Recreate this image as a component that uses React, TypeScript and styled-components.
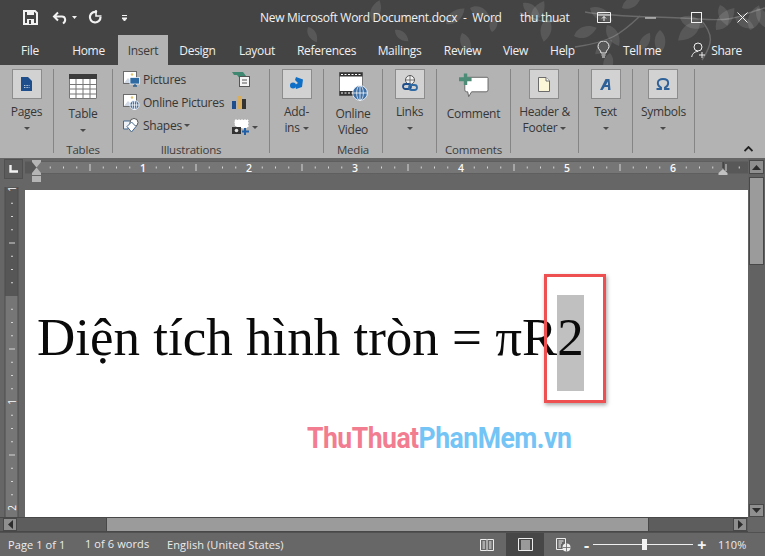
import React from 'react';
import styled, { createGlobalStyle } from 'styled-components';

const GlobalStyle = createGlobalStyle`
  html, body {
    margin: 0;
    padding: 0;
    background: #444;
  }
  * {
    box-sizing: border-box;
  }
`;

const Window = styled.div`
  width: 765px;
  height: 556px;
  display: flex;
  flex-direction: column;
  overflow: hidden;
  position: relative;
  background: #444;
  font-family: 'Open Sans', 'Noto Sans', sans-serif;
  font-size: 12px;
`;

const LeafLayer = styled.svg`
  position: absolute;
  left: 0;
  top: 0;
  pointer-events: none;
`;

const TitleBar = styled.div`
  height: 35px;
  display: flex;
  align-items: center;
  position: relative;
  color: #f2f2f2;
`;

const QuickIcon = styled.svg<{ $left: number }>`
  margin-left: ${(p) => p.$left}px;
  flex: none;
`;

const DocTitle = styled.div`
  margin-left: 133px;
  width: 242px;
  white-space: pre;
  letter-spacing: -0.28px;
  font-size: 12px;
`;

const UserName = styled.div`
  margin-left: 18px;
  width: 52px;
  letter-spacing: -0.3px;
`;

const TabBar = styled.div`
  height: 30px;
  display: flex;
  padding-left: 10px;
  position: relative;
  color: #f0f0f0;
`;

const Tab = styled.div<{ $w: number; $active?: boolean; $gap?: number }>`
  width: ${(p) => p.$w}px;
  margin-right: ${(p) => p.$gap ?? 0}px;
  display: flex;
  align-items: center;
  justify-content: center;
  letter-spacing: -0.3px;
  background: ${(p) => (p.$active ? '#b3b3b3' : 'transparent')};
  color: ${(p) => (p.$active ? '#3a3a3a' : 'inherit')};
`;

const TabTool = styled.div<{ $left: number; $gap: number }>`
  margin-left: ${(p) => p.$left}px;
  display: flex;
  align-items: center;
  gap: ${(p) => p.$gap}px;
  letter-spacing: -0.3px;
`;

const Ribbon = styled.div`
  height: 93px;
  background: #b3b3b3;
  display: flex;
  padding-top: 4px;
  position: relative;
  color: #363636;
`;

const Group = styled.div<{ $w: number }>`
  width: ${(p) => p.$w}px;
  height: 84px;
  border-right: 1px solid #858585;
  display: flex;
  flex-direction: column;
  align-items: center;
`;

const GroupBody = styled.div`
  height: 74px;
  flex: none;
  display: flex;
  justify-content: center;
  width: 100%;
`;

const GroupLabel = styled.div`
  height: 13px;
  line-height: 13px;
  font-size: 11.5px;
  letter-spacing: -0.2px;
  color: #3c3c3c;
`;

const LargeButton = styled.div<{ $plain?: boolean }>`
  display: flex;
  flex-direction: column;
  align-items: center;
  text-align: center;
  line-height: 16px;
  letter-spacing: -0.3px;
  padding-top: ${(p) => (p.$plain ? '3px' : '0')};
  white-space: pre;
`;

const IconBox = styled.div<{ $boxed?: boolean }>`
  width: 30px;
  height: ${(p) => (p.$boxed ? 30 : 28)}px;
  margin-bottom: ${(p) => (p.$boxed ? 5 : 6)}px;
  display: flex;
  align-items: center;
  justify-content: center;
  background: ${(p) => (p.$boxed ? '#d2d2d2' : 'transparent')};
  border: ${(p) => (p.$boxed ? '1px solid #8c8c8c' : 'none')};
`;

const Caret = styled.span<{ $gap?: number }>`
  display: ${(p) => (p.$gap !== undefined ? 'inline-block' : 'block')};
  width: 0;
  height: 0;
  border-left: 3px solid transparent;
  border-right: 3px solid transparent;
  border-top: 3px solid #4a4a4a;
  margin: ${(p) => (p.$gap !== undefined ? `0 0 0 ${p.$gap}px` : '7px auto 0')};
`;

const CaretLine = styled.span`
  display: inline-flex;
  align-items: center;
`;

const IllustrationBody = styled.div`
  display: flex;
  width: 100%;
  padding-left: 10px;
`;

const SmallList = styled.div`
  width: 109px;
  padding-top: 1px;
  display: flex;
  flex-direction: column;
  gap: 5px;
`;

const SmallRow = styled.div`
  height: 18px;
  display: flex;
  align-items: center;
  gap: 3px;
  letter-spacing: -0.25px;
  white-space: nowrap;
`;

const SideIcons = styled.div`
  display: flex;
  flex-direction: column;
  gap: 9px;
  padding-top: 2px;
`;

const SideRow = styled.div`
  height: 16px;
  display: flex;
  align-items: center;
`;

const Collapse = styled.svg`
  position: absolute;
  right: 12px;
  bottom: 6px;
`;

const Workspace = styled.div`
  height: 374px;
  display: grid;
  grid-template-columns: 25px 723px 17px;
  grid-template-rows: 32px 327px 15px;
  background: #666;
`;

const RulerCorner = styled.div`
  margin: 1px 2px 0 4px;
  height: 20px;
  border: 1px solid #505050;
  background: #5c5c5c;
  display: flex;
  align-items: center;
  justify-content: center;
`;

const VerticalScroll = styled.div`
  grid-column: 3;
  grid-row: 1 / 3;
  padding-top: 2px;
  display: flex;
  flex-direction: column;
  align-items: center;
  background: #626262;
`;

const ScrollButton = styled.div<{ $w?: number; $h?: number }>`
  width: ${(p) => p.$w ?? 15}px;
  height: ${(p) => p.$h ?? 14}px;
  flex: none;
  background: #8f8f8f;
  border: 1px solid #484848;
  display: flex;
  align-items: center;
  justify-content: center;
`;

const VerticalThumb = styled.div`
  width: 15px;
  height: 88px;
  margin-top: 3px;
  background: #9b9b9b;
  border: 1px solid #484848;
`;

const VerticalTrack = styled.div`
  flex: 1;
`;

const Page = styled.div`
  background: #fff;
  position: relative;
  padding: 105px 0 0 12px;
  font-family: 'Liberation Serif', serif;
  font-size: 53px;
  line-height: 84px;
  color: #0a0a0a;
  white-space: nowrap;
`;

const Selected = styled.span`
  display: inline-block;
  width: 27px;
  height: 96px;
  background: #c0c0c0;
  vertical-align: top;
`;

const Callout = styled.div`
  position: absolute;
  left: 519px;
  top: 84px;
  width: 62px;
  height: 129px;
  border: 3px solid #ee4f50;
  box-shadow: 1px 2px 4px rgba(0, 0, 0, 0.35);
`;

const Watermark = styled.div`
  position: absolute;
  left: 282px;
  top: 230px;
  font-family: 'Roboto', sans-serif;
  font-weight: 700;
  font-size: 29.5px;
  line-height: 36px;
  letter-spacing: -0.55px;
  color: #74c4f6;
  transform: scaleX(0.9);
  transform-origin: left center;
`;

const WatermarkRed = styled.span`
  color: #f27d90;
`;

const HorizontalScroll = styled.div`
  grid-column: 1 / 3;
  grid-row: 3;
  display: flex;
  align-items: center;
  padding-left: 3px;
  background: #5d5d5d;
  border-top: 1px solid #484848;
  border-bottom: 1px solid #484848;
`;

const HorizontalThumb = styled.div`
  width: 543px;
  height: 13px;
  margin-left: 89px;
  background: #9b9b9b;
  border-left: 1px solid #484848;
  border-right: 1px solid #484848;
`;

const ScrollSpacer = styled.div`
  width: 84px;
`;

const StatusBar = styled.div`
  height: 24px;
  display: flex;
  align-items: stretch;
  background: #676767;
  border-top: 1px solid #515151;
  color: #ececec;
  font-size: 11px;
`;

const StatusText = styled.div<{ $left: number; $w: number; $up?: boolean }>`
  margin-left: ${(p) => p.$left}px;
  width: ${(p) => p.$w}px;
  display: flex;
  align-items: center;
  white-space: nowrap;
  letter-spacing: 0.1px;
  padding-bottom: ${(p) => (p.$up ? 2 : 0)}px;
`;

const ViewButton = styled.div<{ $left?: number; $active?: boolean }>`
  margin-left: ${(p) => p.$left ?? 0}px;
  width: ${(p) => (p.$active ? 38 : 16)}px;
  display: flex;
  align-items: center;
  justify-content: center;
  background: ${(p) => (p.$active ? '#474747' : 'transparent')};
`;

const ZoomSlider = styled.div`
  margin-left: 13px;
  width: 120px;
  display: flex;
  align-items: center;
  gap: 4px;
`;

const ZoomSign = styled.div`
  width: 9px;
  font-weight: 700;
  font-size: 16px;
  line-height: 14px;
  text-align: center;
  color: #f4f4f4;
`;

const ZoomLine = styled.div`
  flex: none;
  width: 100px;
  height: 1px;
  background: #f0f0f0;
  position: relative;
`;

const ZoomThumb = styled.div`
  position: absolute;
  left: 49px;
  top: -5px;
  width: 5px;
  height: 11px;
  background: #f4f4f4;
`;

const RulerSvg = styled.svg`
  overflow: visible;
  display: block;
`;

const leaves: [number, number, number, number][] = [
  [308, 27, 60, 0.8], [372, 21, -70, 1], [395, 30, 40, 0.8], [446, 24, -40, 1.1], [462, 33, 70, 1],
  [470, 8, 20, 0.9], [492, 32, -80, 0.8], [523, 3, 40, 1], [532, 22, -60, 1.1], [548, 18, 100, 1.1],
  [574, 36, -20, 1.1], [590, 8, 30, 1.2], [607, 25, 60, 1.1], [612, 40, 140, 1], [622, 8, -30, 1],
  [640, 50, -60, 0.9], [660, 30, 90, 1.1], [680, 18, 20, 1.2], [700, 22, 140, 1.3], [716, 30, -50, 1.3],
  [720, 5, 70, 1], [735, 17, 30, 1], [750, 30, -70, 1.2], [757, 8, 60, 1.1], [610, 53, 100, 1],
];

const LeafArt = () => (
  <LeafLayer width={765} height={65} viewBox="0 0 765 65">
    <path d="M585 12 C620 18 660 16 700 19 S740 14 765 8 M640 16 C620 35 610 42 575 47 M520 13 C535 20 545 24 560 20 M700 19 C715 35 712 45 702 60" stroke="#6a6a6a" strokeWidth="1.4" fill="none" />
    {leaves.map(([x, y, r, s]) => (
      <path
        key={`${x}-${y}`}
        d="M0 0 C5 -6 14 -7 22 0 C14 7 5 6 0 0Z"
        fill="#fff"
        opacity={0.11}
        transform={`translate(${x} ${y}) rotate(${r}) scale(${s})`}
      />
    ))}
  </LeafLayer>
);

const SaveIcon = () => (
  <QuickIcon $left={23} width={15} height={15} viewBox="0 0 15 15">
    <path d="M1 1H12L14 3V14H1Z" fill="none" stroke="#f2f2f2" strokeWidth="2" />
    <rect x="4" y="1" width="7" height="4" fill="#f2f2f2" />
    <rect x="4" y="9" width="7" height="5" fill="#f2f2f2" />
    <rect x="6" y="10" width="2" height="4" fill="#444" />
  </QuickIcon>
);

const UndoIcon = () => (
  <QuickIcon $left={14} width={16} height={14} viewBox="0 0 16 14">
    <path d="M6 1.5 2 5.5 6 9.5M2 5.5H10C13.5 5.5 14.5 10 11 12.5" fill="none" stroke="#f2f2f2" strokeWidth="2" />
  </QuickIcon>
);

const SmallCaret = ({ left }: { left: number }) => (
  <QuickIcon $left={left} width={5} height={3} viewBox="0 0 5 3">
    <path d="M0 0H5L2.5 3Z" fill="#f2f2f2" />
  </QuickIcon>
);

const RedoIcon = () => (
  <QuickIcon $left={11} width={15} height={15} viewBox="0 0 15 15">
    <path d="M9 2.2A5.3 5.3 0 1 0 12.5 7" fill="none" stroke="#f2f2f2" strokeWidth="2.2" />
    <path d="M8 0V6H13.5" fill="none" stroke="#f2f2f2" strokeWidth="1.6" />
  </QuickIcon>
);

const CustomizeIcon = () => (
  <QuickIcon $left={19} width={5} height={6} viewBox="0 0 5 6">
    <path d="M0 0.5H5M0 3H5L2.5 6Z" stroke="#f2f2f2" strokeWidth="1" fill="#f2f2f2" />
  </QuickIcon>
);

const WindowControls = () => (
  <>
    <QuickIcon $left={25} width={14} height={11} viewBox="0 0 14 11">
      <path d="M.5.5H13.5V10.5H.5ZM.5 3H13.5M7 9V4.5M5 6.5 7 4.5 9 6.5" fill="none" stroke="#f2f2f2" />
    </QuickIcon>
    <QuickIcon $left={34} width={11} height={2} viewBox="0 0 11 2">
      <path d="M0 1H11" stroke="#f2f2f2" strokeWidth="1" />
    </QuickIcon>
    <QuickIcon $left={35} width={11} height={11} viewBox="0 0 11 11">
      <rect x=".5" y=".5" width="10" height="10" fill="none" stroke="#f2f2f2" />
    </QuickIcon>
    <QuickIcon $left={35} width={11} height={11} viewBox="0 0 11 11">
      <path d="M.5.5 10.5 10.5M10.5.5.5 10.5" stroke="#f2f2f2" />
    </QuickIcon>
  </>
);

const BulbIcon = () => (
  <svg width="13" height="18" viewBox="0 0 13 18">
    <path d="M4 12C4 9 1 8.5 1 5.5A5.5 5.5 0 0 1 12 5.5C12 8.5 9 9 9 12Z" fill="none" stroke="#f0f0f0" />
    <path d="M4.5 14H8.5M5 16H8" stroke="#f0f0f0" />
  </svg>
);

const ShareIcon = () => (
  <svg width="15" height="16" viewBox="0 0 15 16">
    <circle cx="7" cy="5" r="4" fill="none" stroke="#f0f0f0" />
    <path d="M.7 15C1.5 11 4 9.5 7 9.5M11 10V16M8 13H14" fill="none" stroke="#f0f0f0" />
  </svg>
);

const PagesIcon = () => (
  <svg width="11" height="14" viewBox="0 0 11 14">
    <path d="M0 0H7L11 4V14H0Z" fill="#1f4e8c" />
    <path d="M3 8.5H8.5M3 10.5H8.5" stroke="#bcd" strokeDasharray="1 .6" />
  </svg>
);

const TableIcon = () => (
  <svg width="28" height="25" viewBox="0 0 28 25">
    <rect width="28" height="25" fill="#fff" />
    <rect width="28" height="5" fill="#3b3b3b" />
    <path d="M0 10.5H28M0 15H28M0 20H28M7 5V25M14 5V25M21 5V25M.5 5V24.5H27.5V5" fill="none" stroke="#777" strokeWidth="1" />
  </svg>
);

const PictureBase = () => (
  <>
    <rect x=".5" y=".5" width="13" height="12" fill="#fff" stroke="#6b6b6b" />
    <circle cx="9" cy="3.5" r="1.2" fill="#e2c36b" />
    <path d="M1 12 5 7 8 10 10 8 13 12Z" fill="#cfd8e4" />
  </>
);

const PicturesIcon = () => (
  <svg width="17" height="16" viewBox="0 0 17 16">
    <PictureBase />
    <rect x="7" y="6.5" width="9.5" height="6.5" fill="#2f6aa3" stroke="#fff" strokeWidth=".7" />
    <path d="M10 15H14M12 13V15" stroke="#2f5f8f" strokeWidth="1.3" />
  </svg>
);

const GlobeGlyph = ({ cx, cy, r }: { cx: number; cy: number; r: number }) => (
  <>
    <circle cx={cx} cy={cy} r={r} fill="#3b6ea5" stroke="#fff" strokeWidth=".8" />
    <path d={`M${cx - r} ${cy}H${cx + r}M${cx} ${cy - r}V${cy + r}`} stroke="#fff" strokeWidth=".8" />
    <ellipse cx={cx} cy={cy} rx={r / 2.2} ry={r} fill="none" stroke="#fff" strokeWidth=".7" />
  </>
);

const OnlinePicturesIcon = () => (
  <svg width="17" height="16" viewBox="0 0 17 16">
    <PictureBase />
    <GlobeGlyph cx={11.5} cy={11} r={4.6} />
  </svg>
);

const ShapesIcon = () => (
  <svg width="17" height="15" viewBox="0 0 17 15">
    <path d="M.5 3H8L5 11H.5Z" fill="#eef2f6" stroke="#44688f" />
    <circle cx="11" cy="4.5" r="4" fill="#fff" stroke="#555" />
    <path d="M8.5 4 13 8.5 8.5 14 4 8.5Z" fill="#fff" stroke="#44688f" />
  </svg>
);

const SmartArtIcon = () => (
  <svg width="18" height="16" viewBox="0 0 18 16">
    <path d="M0 1H11L14 5H9V9L5 4H2Z" fill="#3f8770" />
    <rect x="7.5" y="5.5" width="10" height="10" fill="#f4f4f4" stroke="#555" />
    <path d="M10 9H15M10 12H15" stroke="#555" />
  </svg>
);

const ChartIcon = () => (
  <svg width="15" height="14" viewBox="0 0 15 14">
    <rect y="5" width="4" height="8" fill="#1f4e8c" />
    <rect x="5" y="0" width="4" height="13" fill="#d8ae60" />
    <rect x="10" y="3" width="4" height="10" fill="#333" />
  </svg>
);

const ScreenshotIcon = () => (
  <svg width="18" height="16" viewBox="0 0 18 16">
    <path d="M3 1H16V8L13 9H6L3 6Z" fill="#fff" stroke="#fff" strokeDasharray="2 1" />
    <rect y="8" width="9" height="7" fill="#333" />
    <circle cx="4.5" cy="11.5" r="1.8" fill="#ddd" />
    <path d="M13 9V16M10 12.5H17" stroke="#1f5fa8" strokeWidth="2" />
  </svg>
);

const AddInsIcon = () => (
  <svg width="16" height="16" viewBox="0 0 16 16">
    <path d="M7 1 14 3.5 13 11 7 13 6 9 9 7 6 4Z" fill="#0f6fc6" />
    <circle cx="4" cy="9.5" r="3" fill="#0f6fc6" />
  </svg>
);

const VideoIcon = () => (
  <svg width="29" height="29" viewBox="0 0 29 29">
    <rect x=".5" y=".5" width="23" height="23" fill="#fff" stroke="#777" />
    <rect x=".5" y=".5" width="23" height="4" fill="#333" />
    <rect x=".5" y="19" width="23" height="4.5" fill="#333" />
    <path d="M2 2.5H22M2 21H22" stroke="#fff" strokeDasharray="2 1.5" />
    <GlobeGlyph cx={21} cy={21} r={7.4} />
  </svg>
);

const LinksIcon = () => (
  <svg width="16" height="18" viewBox="0 0 16 18">
    <circle cx="8" cy="5" r="4.5" fill="#f2f2f2" stroke="#555" />
    <path d="M3.5 5H12.5M8 .5V9" stroke="#555" strokeWidth=".8" />
    <rect x="1" y="9" width="8" height="5" rx="2.5" fill="none" stroke="#1f4e8c" strokeWidth="1.8" />
    <rect x="7" y="10" width="8" height="5" rx="2.5" fill="none" stroke="#2f6aa3" strokeWidth="1.8" />
  </svg>
);

const CommentIcon = () => (
  <svg width="31" height="27" viewBox="0 0 31 27">
    <path d="M6 4H29Q30 4 30 5V17Q30 19 28 19H13L10 24 9 19H8Q6 19 6 17Z" fill="#fff" stroke="#666" />
    <path d="M5 0H8.5V4H13V8H8.5V12H5V8H0V4H5Z" fill="#4d8d78" />
  </svg>
);

const HeaderIcon = () => (
  <svg width="12" height="15" viewBox="0 0 12 15">
    <path d="M.5.5H8L11.5 4V14.5H.5Z" fill="#fbf6d8" stroke="#6b6b6b" />
    <path d="M8 .5V4H11.5" fill="#fff" stroke="#6b6b6b" />
  </svg>
);

const TextIcon = () => (
  <svg width="11" height="11" viewBox="0 0 11 11">
    <path d="M5.5 0H9.5L10.5 11H8V8H4.6L2.6 11H0ZM5.8 6H8V2.4Z" fill="#2f6199" fillRule="evenodd" />
  </svg>
);

const OmegaIcon = () => (
  <svg width="14" height="12" viewBox="0 0 14 12">
    <path d="M.5 11H5V9.5C2.8 8.5 1.8 7 1.8 5 1.8 2.5 4 1 7 1S12.2 2.5 12.2 5C12.2 7 11.2 8.5 9 9.5V11H13.5" fill="none" stroke="#2f6199" strokeWidth="1.9" />
  </svg>
);

const CornerMark = () => (
  <svg width="9" height="8" viewBox="0 0 9 8">
    <path d="M1.5 0V6.5H9" fill="none" stroke="#f2f2f2" strokeWidth="2.4" />
  </svg>
);

const tickOffsets = Array.from({ length: 55 }, (_, i) => i * 13.25);

const HorizontalRuler = () => (
  <RulerSvg width="723" height="32" viewBox="25 0 723 32">
    <rect x="25" y="3.5" width="723" height="12" fill="#585858" />
    <rect x="37" y="4" width="686" height="11" fill="#767676" />
    {tickOffsets.map((o, i) => {
      const x = 37 + o;
      if (x > 745 || i === 0 || i % 8 === 0) return null;
      return i % 4 === 0 ? (
        <path key={i} d={`M${x} 6V13`} stroke="#d6d6d6" />
      ) : (
        <path key={i} d={`M${x} 8.5V10.5`} stroke="#d6d6d6" />
      );
    })}
    {[1, 2, 3, 4, 5, 6].map((n) => (
      <text key={n} x={37 + n * 106} y={14} fontSize="10.5" textAnchor="middle" fill="#fafafa" fontWeight="600" fontFamily="Open Sans">
        {n}
      </text>
    ))}
    <path d="M32 2H41V4L36.5 9.5 32 4Z" fill="#b5b5b5" />
    <path d="M36.5 9.5 41 15V17H32V15Z" fill="#b5b5b5" />
    <rect x="32" y="18" width="9" height="6" fill="#b5b5b5" />
    <path d="M723 11 727.5 15V17H718.5V15Z" fill="#c2c2c2" />
    <path d="M723 4V10" stroke="#333" />
  </RulerSvg>
);

const VerticalRuler = () => (
  <RulerSvg width="25" height="327" viewBox="0 0 25 327">
    <rect x="5" y="-3" width="13" height="109" fill="#565656" />
    <rect x="5" y="106" width="13" height="221" fill="#767676" />
    <path d="M5 -3V327M18 -3V327" stroke="#4c4c4c" />
    {Array.from({ length: 25 }, (_, i) => i * 13.25).map((o, i) => {
      if (i % 8 === 0) return null;
      return <path key={i} d={i % 4 === 0 ? `M9 ${o}H15` : `M11 ${o}H13`} stroke="#d6d6d6" />;
    })}
    <text transform="rotate(-90 12 -1) translate(0 4)" x="12" y="-1" fontSize="10" fill="#fafafa" textAnchor="middle" fontFamily="Open Sans">1</text>
    <text transform="rotate(-90 12 212) translate(0 4)" x="12" y="212" fontSize="10" fill="#fafafa" textAnchor="middle" fontFamily="Open Sans">1</text>
    <text transform="rotate(-90 12 318) translate(0 4)" x="12" y="318" fontSize="10" fill="#fafafa" textAnchor="middle" fontFamily="Open Sans">2</text>
  </RulerSvg>
);

const Arrow = ({ d }: { d: string }) => (
  <svg width="9" height="9" viewBox="0 0 9 9">
    <path d={d} fill="#2c2c2c" />
  </svg>
);

const ReadIcon = () => (
  <svg width="14" height="14" viewBox="0 0 14 14">
    <path d="M.5 1.5H6.5L7 2 7.5 1.5H13.5V12.5H7.5L7 13 6.5 12.5H.5ZM7 2V13M2.5 4H5M2.5 6H5M2.5 8H5M2.5 10H5M9 4H11.5M9 6H11.5M9 8H11.5M9 10H11.5" fill="none" stroke="#eee" />
  </svg>
);

const PrintIcon = () => (
  <svg width="15" height="13" viewBox="0 0 15 13">
    <path d="M.5.5H14.5V12.5H.5ZM3 3H12M3 5H12M3 7H12M3 9H12M3 11H12" fill="none" stroke="#eee" />
  </svg>
);

const WebIcon = () => (
  <svg width="15" height="14" viewBox="0 0 15 14">
    <path d="M.5.5H9.5V11.5H.5ZM2.5 3H7.5M2.5 5H6M2.5 7H5M2.5 9H5" fill="none" stroke="#eee" />
    <circle cx="10.5" cy="9.5" r="4" fill="#eee" />
    <path d="M6.5 9.5H14.5M10.5 5.5V13.5" stroke="#666" strokeWidth=".8" />
  </svg>
);

const App: React.FC = () => {
  return (
    <Window>
      <GlobalStyle />
      <LeafArt />
      <TitleBar>
        <SaveIcon />
        <UndoIcon />
        <SmallCaret left={4} />
        <RedoIcon />
        <CustomizeIcon />
        <DocTitle>New Microsoft Word Document.docx  -  Word</DocTitle>
        <UserName>thu thuat</UserName>
        <WindowControls />
      </TitleBar>
      <TabBar>
        <Tab $w={40} $gap={11}>File</Tab>
        <Tab $w={55} $gap={2}>Home</Tab>
        <Tab $w={50} $active>Insert</Tab>
        <Tab $w={59}>Design</Tab>
        <Tab $w={60}>Layout</Tab>
        <Tab $w={79}>References</Tab>
        <Tab $w={67}>Mailings</Tab>
        <Tab $w={59}>Review</Tab>
        <Tab $w={47}>View</Tab>
        <Tab $w={47}>Help</Tab>
        <TabTool $left={11} $gap={13}>
          <BulbIcon />
          <span>Tell me</span>
        </TabTool>
        <TabTool $left={30} $gap={5}>
          <ShareIcon />
          <span>Share</span>
        </TabTool>
      </TabBar>
      <Ribbon>
        <Group $w={54}>
          <GroupBody>
            <LargeButton>
              <IconBox $boxed><PagesIcon /></IconBox>
              Pages
              <Caret />
            </LargeButton>
          </GroupBody>
        </Group>
        <Group $w={59}>
          <GroupBody>
            <LargeButton $plain>
              <IconBox><TableIcon /></IconBox>
              Table
              <Caret />
            </LargeButton>
          </GroupBody>
          <GroupLabel>Tables</GroupLabel>
        </Group>
        <Group $w={157}>
          <GroupBody>
            <IllustrationBody>
              <SmallList>
                <SmallRow><PicturesIcon />Pictures</SmallRow>
                <SmallRow><OnlinePicturesIcon />Online Pictures</SmallRow>
                <SmallRow><ShapesIcon /><CaretLine>Shapes<Caret $gap={2} /></CaretLine></SmallRow>
              </SmallList>
              <SideIcons>
                <SmartArtIcon />
                <ChartIcon />
                <SideRow><ScreenshotIcon /><Caret $gap={2} /></SideRow>
              </SideIcons>
            </IllustrationBody>
          </GroupBody>
          <GroupLabel>Illustrations</GroupLabel>
        </Group>
        <Group $w={54}>
          <GroupBody>
            <LargeButton>
              <IconBox $boxed><AddInsIcon /></IconBox>
              Add-
              <CaretLine>ins<Caret $gap={3} /></CaretLine>
            </LargeButton>
          </GroupBody>
        </Group>
        <Group $w={59}>
          <GroupBody>
            <LargeButton $plain>
              <IconBox><VideoIcon /></IconBox>
              {'Online\nVideo'}
            </LargeButton>
          </GroupBody>
          <GroupLabel>Media</GroupLabel>
        </Group>
        <Group $w={54}>
          <GroupBody>
            <LargeButton>
              <IconBox $boxed><LinksIcon /></IconBox>
              Links
              <Caret />
            </LargeButton>
          </GroupBody>
        </Group>
        <Group $w={74}>
          <GroupBody>
            <LargeButton $plain>
              <IconBox><CommentIcon /></IconBox>
              Comment
            </LargeButton>
          </GroupBody>
          <GroupLabel>Comments</GroupLabel>
        </Group>
        <Group $w={68}>
          <GroupBody>
            <LargeButton>
              <IconBox $boxed><HeaderIcon /></IconBox>
              Header &amp;
              <CaretLine>Footer<Caret $gap={3} /></CaretLine>
            </LargeButton>
          </GroupBody>
        </Group>
        <Group $w={54}>
          <GroupBody>
            <LargeButton>
              <IconBox $boxed><TextIcon /></IconBox>
              Text
              <Caret />
            </LargeButton>
          </GroupBody>
        </Group>
        <Group $w={62}>
          <GroupBody>
            <LargeButton>
              <IconBox $boxed><OmegaIcon /></IconBox>
              Symbols
              <Caret />
            </LargeButton>
          </GroupBody>
        </Group>
        <Collapse width="9" height="6" viewBox="0 0 9 6">
          <path d="M.5 5 4.5 1 8.5 5" fill="none" stroke="#222" strokeWidth="1.8" />
        </Collapse>
      </Ribbon>
      <Workspace>
        <RulerCorner><CornerMark /></RulerCorner>
        <HorizontalRuler />
        <VerticalScroll>
          <ScrollButton><Arrow d="M4.5 2 9 7H0Z" /></ScrollButton>
          <VerticalThumb />
          <VerticalTrack />
          <ScrollButton $h={13}><Arrow d="M4.5 7 9 2H0Z" /></ScrollButton>
        </VerticalScroll>
        <VerticalRuler />
        <Page>
          Diện tích hình tròn = πR<Selected>2</Selected>
          <Callout />
          <Watermark><WatermarkRed>ThuThuat</WatermarkRed>PhanMem.vn</Watermark>
        </Page>
        <HorizontalScroll>
          <ScrollButton $w={14} $h={13}><Arrow d="M2 4.5 7 0V9Z" /></ScrollButton>
          <HorizontalThumb />
          <ScrollSpacer />
          <ScrollButton $w={14} $h={13}><Arrow d="M7 4.5 2 0V9Z" /></ScrollButton>
        </HorizontalScroll>
      </Workspace>
      <StatusBar>
        <StatusText $left={8} $w={77}>Page 1 of 1</StatusText>
        <StatusText $left={0} $w={82} $up>1 of 6 words</StatusText>
        <StatusText $left={0} $w={312}>English (United States)</StatusText>
        <ViewButton><ReadIcon /></ViewButton>
        <ViewButton $left={11} $active><PrintIcon /></ViewButton>
        <ViewButton $left={11}><WebIcon /></ViewButton>
        <ZoomSlider>
          <ZoomSign>-</ZoomSign>
          <ZoomLine><ZoomThumb /></ZoomLine>
          <ZoomSign>+</ZoomSign>
        </ZoomSlider>
        <StatusText $left={14} $w={30}>110%</StatusText>
      </StatusBar>
    </Window>
  );
};

export default App;
